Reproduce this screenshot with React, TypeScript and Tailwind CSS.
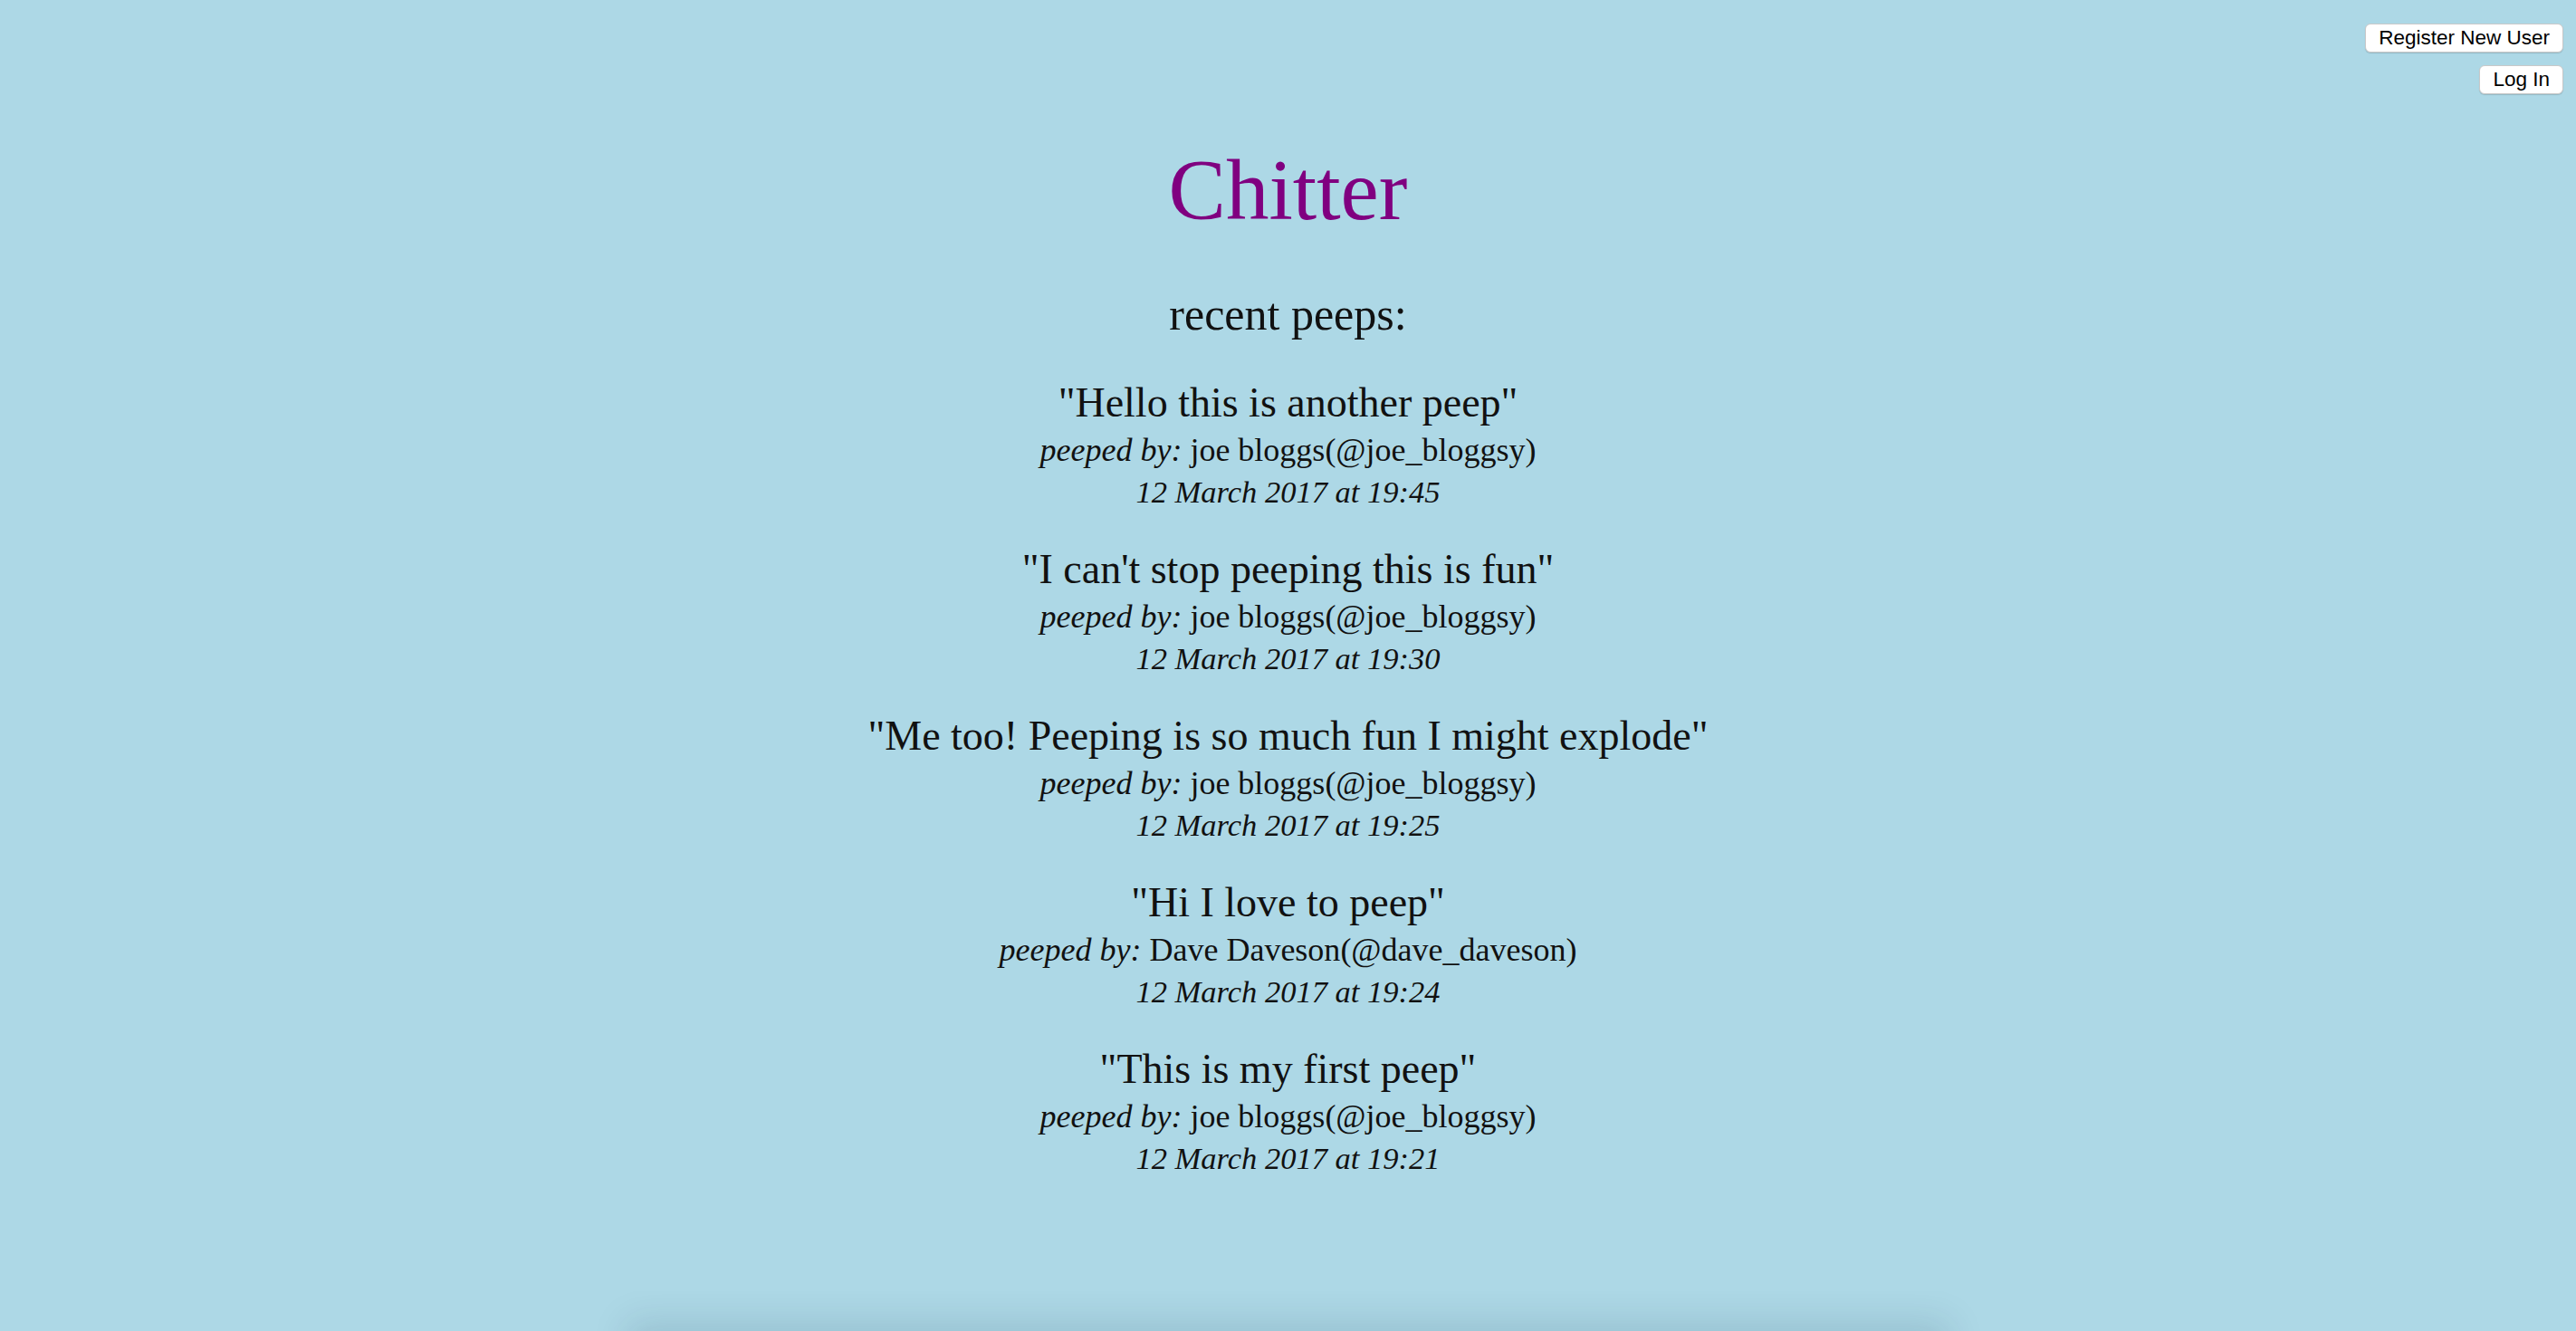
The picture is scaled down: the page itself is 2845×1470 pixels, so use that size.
import React from "react";

type Peep = { text: string; name: string; handle: string; time: string };

const peeps: Peep[] = [
  { text: "Hello this is another peep", name: "joe bloggs", handle: "joe_bloggsy", time: "12 March 2017 at 19:45" },
  { text: "I can't stop peeping this is fun", name: "joe bloggs", handle: "joe_bloggsy", time: "12 March 2017 at 19:30" },
  { text: "Me too! Peeping is so much fun I might explode", name: "joe bloggs", handle: "joe_bloggsy", time: "12 March 2017 at 19:25" },
  { text: "Hi I love to peep", name: "Dave Daveson", handle: "dave_daveson", time: "12 March 2017 at 19:24" },
  { text: "This is my first peep", name: "joe bloggs", handle: "joe_bloggsy", time: "12 March 2017 at 19:21" },
];

export default function App() {
  return (
    <div className="h-[1470px] w-full overflow-hidden bg-[#add8e6] flex flex-col font-['Liberation_Serif',serif] text-[#111]">
      <div className="flex flex-col items-end gap-[14px] pt-[26px] pr-[14px]">
        <button className="h-[32px] px-[14px] rounded-[6px] bg-white border border-[#c9c9c9] shadow-[0_1px_1px_rgba(0,0,0,0.15)] font-['Liberation_Sans',Arial,sans-serif] text-[22.5px] leading-none text-black">
          Register New User
        </button>
        <button className="h-[32px] px-[14px] rounded-[6px] bg-white border border-[#c9c9c9] shadow-[0_1px_1px_rgba(0,0,0,0.15)] font-['Liberation_Sans',Arial,sans-serif] text-[22.5px] leading-none text-black">
          Log In
        </button>
      </div>

      <h1 className="mt-[46px] text-center text-[95px] leading-[120px] text-[#800080]">Chitter</h1>
      <h2 className="mt-[47px] text-center text-[50px] leading-[60px]">recent peeps:</h2>

      <div className="mt-[40px] flex flex-col items-center gap-[36px]">
        {peeps.map((p, i) => (
          <div key={i} className="flex flex-col items-center text-center">
            <div className="text-[46px] leading-[56px]">"{p.text}"</div>
            <div className="text-[36px] leading-[48px]">
              <span className="italic">peeped by: </span>
              <span>{p.name}</span>
              <span>(@{p.handle})</span>
            </div>
            <div className="text-[34.5px] leading-[44px] italic">{p.time}</div>
          </div>
        ))}
      </div>

      <div className="mt-auto h-[44px] w-full overflow-hidden">
        <div className="mx-auto mt-[44px] h-[100px] w-[1440px] shadow-[0_0_40px_10px_rgba(0,40,60,0.13)]" />
      </div>
    </div>
  );
}
